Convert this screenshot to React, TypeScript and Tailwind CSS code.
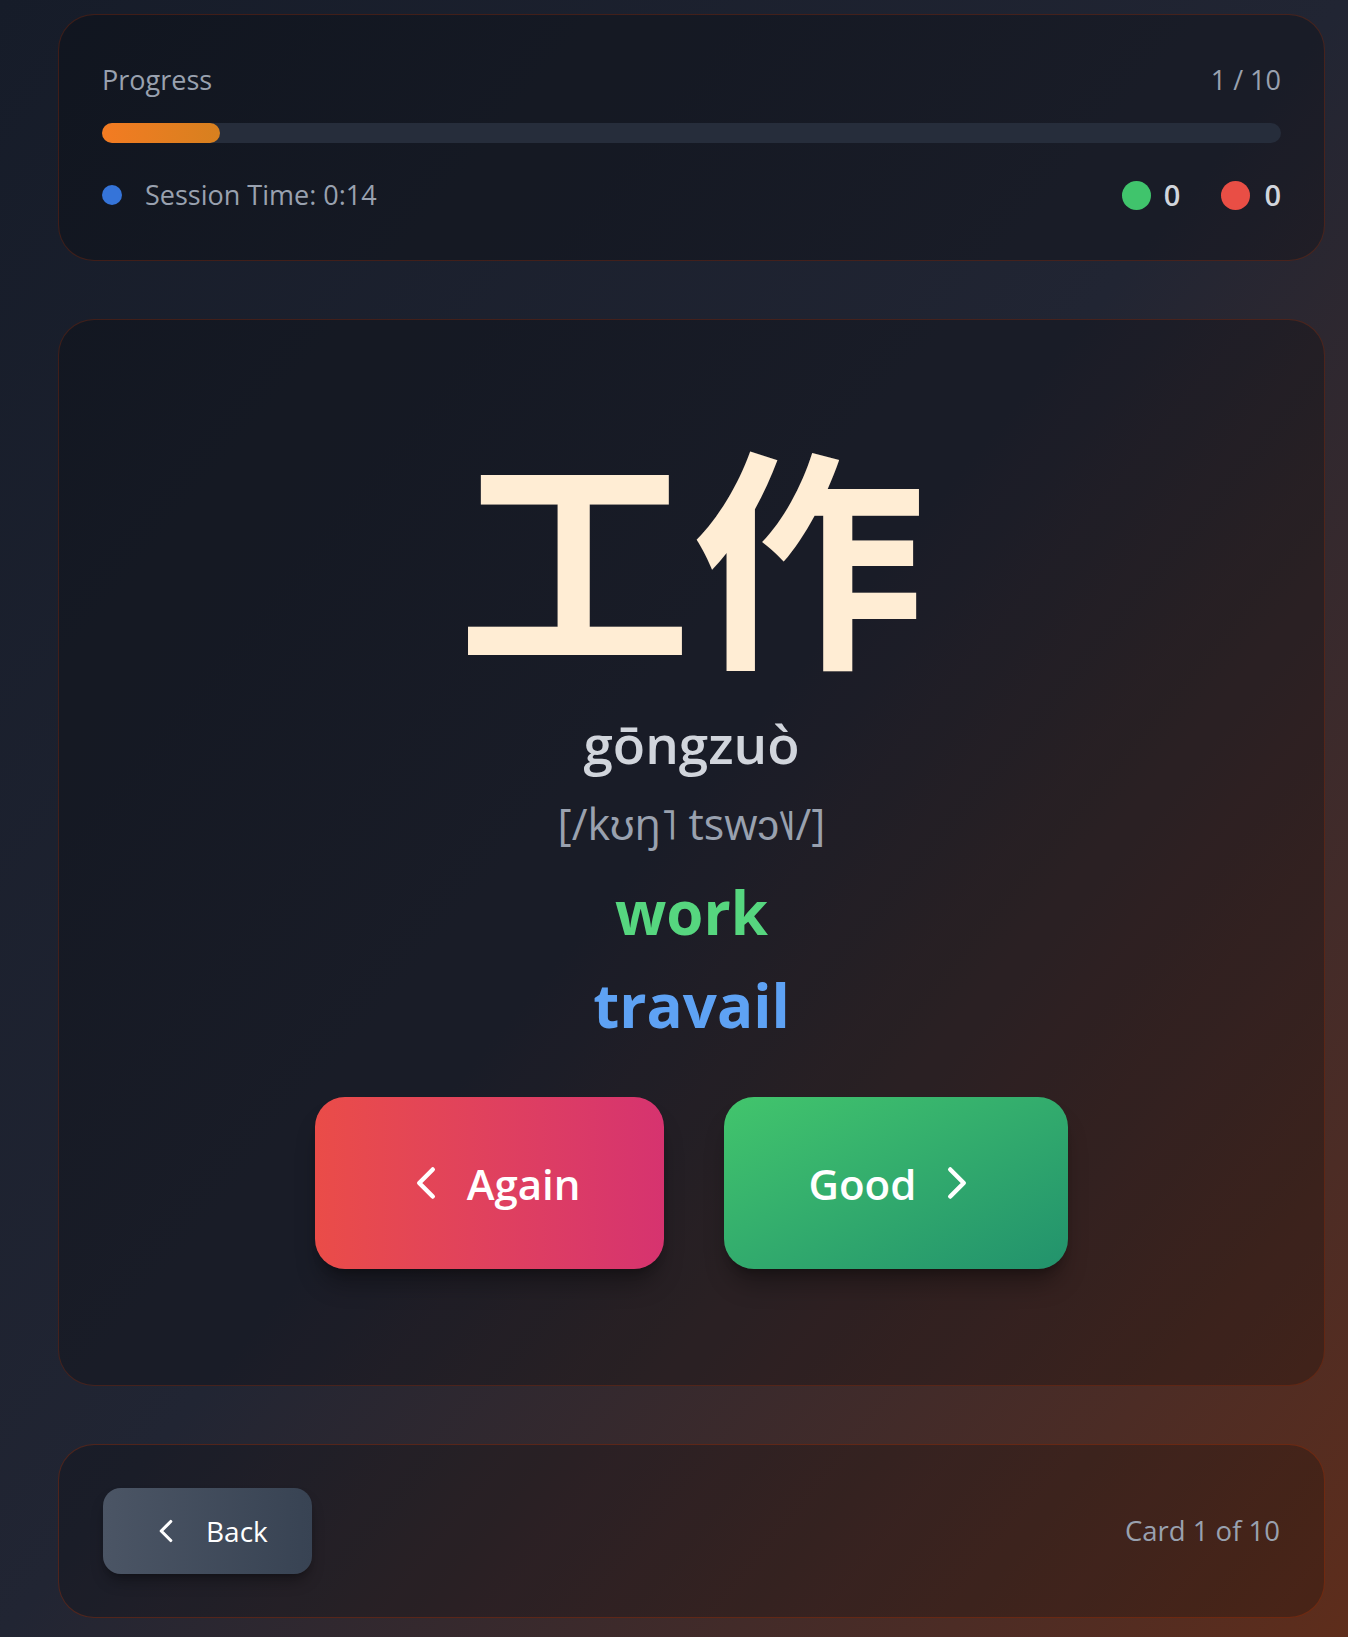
import { ChevronLeft, ChevronRight } from 'lucide-react'

interface FlashCard {
  hanzi: string
  pinyin: string
  ipa: string
  english: string
  french: string
}

const card: FlashCard = {
  hanzi: '工作',
  pinyin: 'gōngzuò',
  ipa: '[/kʊŋ˥ tswɔ˥˩/]',
  english: 'work',
  french: 'travail',
}

function ProgressPanel({ index, total, time, good, again }: { index: number; total: number; time: string; good: number; again: number }) {
  const pct = (index / total) * 100

  return (
    <div className="rounded-[36px] border border-orange-700/25 bg-black/22 px-[43px] pt-[45px] pb-[45px]">
      <div className="flex items-center justify-between text-[27px] leading-[40px] text-gray-400">
        <span>Progress</span>
        <span>{index} / {total}</span>
      </div>

      <div className="mt-[23px] h-[20px] rounded-full bg-[#262d3b]">
        <div className="h-full rounded-full bg-linear-to-r from-[#f37b22] to-[#d7801f]" style={{ width: `${pct}%` }} />
      </div>

      <div className="mt-[32px] flex items-center justify-between">
        <div className="flex items-center gap-[23px]">
          <span className="h-[20px] w-[20px] rounded-full bg-[#3574d9]" />
          <span className="text-[27px] leading-[40px] text-gray-400">Session Time: {time}</span>
        </div>
        <div className="flex items-center gap-[41px]">
          <div className="flex items-center gap-[13px]">
            <span className="h-[29px] w-[29px] rounded-full bg-[#40c46c]" />
            <span className="text-[29px] leading-[40px] font-semibold text-gray-300">{good}</span>
          </div>
          <div className="flex items-center gap-[14px]">
            <span className="h-[29px] w-[29px] rounded-full bg-[#e94e45]" />
            <span className="text-[29px] leading-[40px] font-semibold text-gray-300">{again}</span>
          </div>
        </div>
      </div>
    </div>
  )
}

function CardFace({ data }: { data: FlashCard }) {
  return (
    <div className="flex flex-col items-center rounded-[36px] border border-orange-700/25 bg-black/22 pt-[111px] pb-[116px]">
      {/* 漢字 */}
      <div className="font-['Noto_Sans_CJK_SC',sans-serif] text-[234px] leading-[234px] font-bold text-orange-100">
        {data.hanzi}
      </div>

      <div className="mt-[47px] text-[53px] leading-[64px] font-semibold text-gray-300">{data.pinyin}</div>
      <div className="mt-[22px] text-[43px] leading-[52px] text-gray-400">{data.ipa}</div>
      <div className="mt-[22px] text-[60px] leading-[80px] font-bold text-[#56d67f]">{data.english}</div>
      <div className="mt-[13px] text-[60px] leading-[80px] font-bold text-[#5ea2f4]">{data.french}</div>

      <div className="mt-[52px] flex items-center gap-[60px]">
        <button className="flex h-[172px] items-center gap-[14px] rounded-[30px] bg-linear-to-r from-[#ea4c48] to-[#d6336f] px-[84px] text-[42px] font-semibold text-white shadow-xl shadow-black/30">
          <ChevronLeft size={54} strokeWidth={2} />
          Again
        </button>
        <button className="flex h-[172px] items-center gap-[14px] rounded-[30px] bg-linear-to-br from-[#42c56c] to-[#22926c] px-[84px] text-[42px] font-semibold text-white shadow-xl shadow-black/30">
          Good
          <ChevronRight size={54} strokeWidth={2} />
        </button>
      </div>
    </div>
  )
}

export default function App() {
  return (
    <div className="min-h-screen bg-linear-to-br from-[#161c29] via-[#212533] via-50% to-[#5e2d1b] pt-[14px] pr-[23px] pb-[20px] pl-[58px] font-['Open_Sans','Noto_Sans_CJK_SC',sans-serif]">
      <div className="flex flex-col gap-[58px]">
        <ProgressPanel index={1} total={10} time="0:14" good={0} again={0} />
        <CardFace data={card} />

        <div className="flex items-center justify-between rounded-[36px] border border-orange-700/30 bg-black/20 px-[44px] py-[43px]">
          <button className="flex h-[86px] items-center gap-[21px] rounded-[18px] bg-linear-to-r from-[#4b5565] to-[#384353] px-[44px] text-[28px] font-medium text-white shadow-lg shadow-black/30">
            <ChevronLeft size={38} strokeWidth={2} />
            Back
          </button>
          <span className="text-[27.5px] text-gray-400">Card 1 of 10</span>
        </div>
      </div>
    </div>
  )
}
